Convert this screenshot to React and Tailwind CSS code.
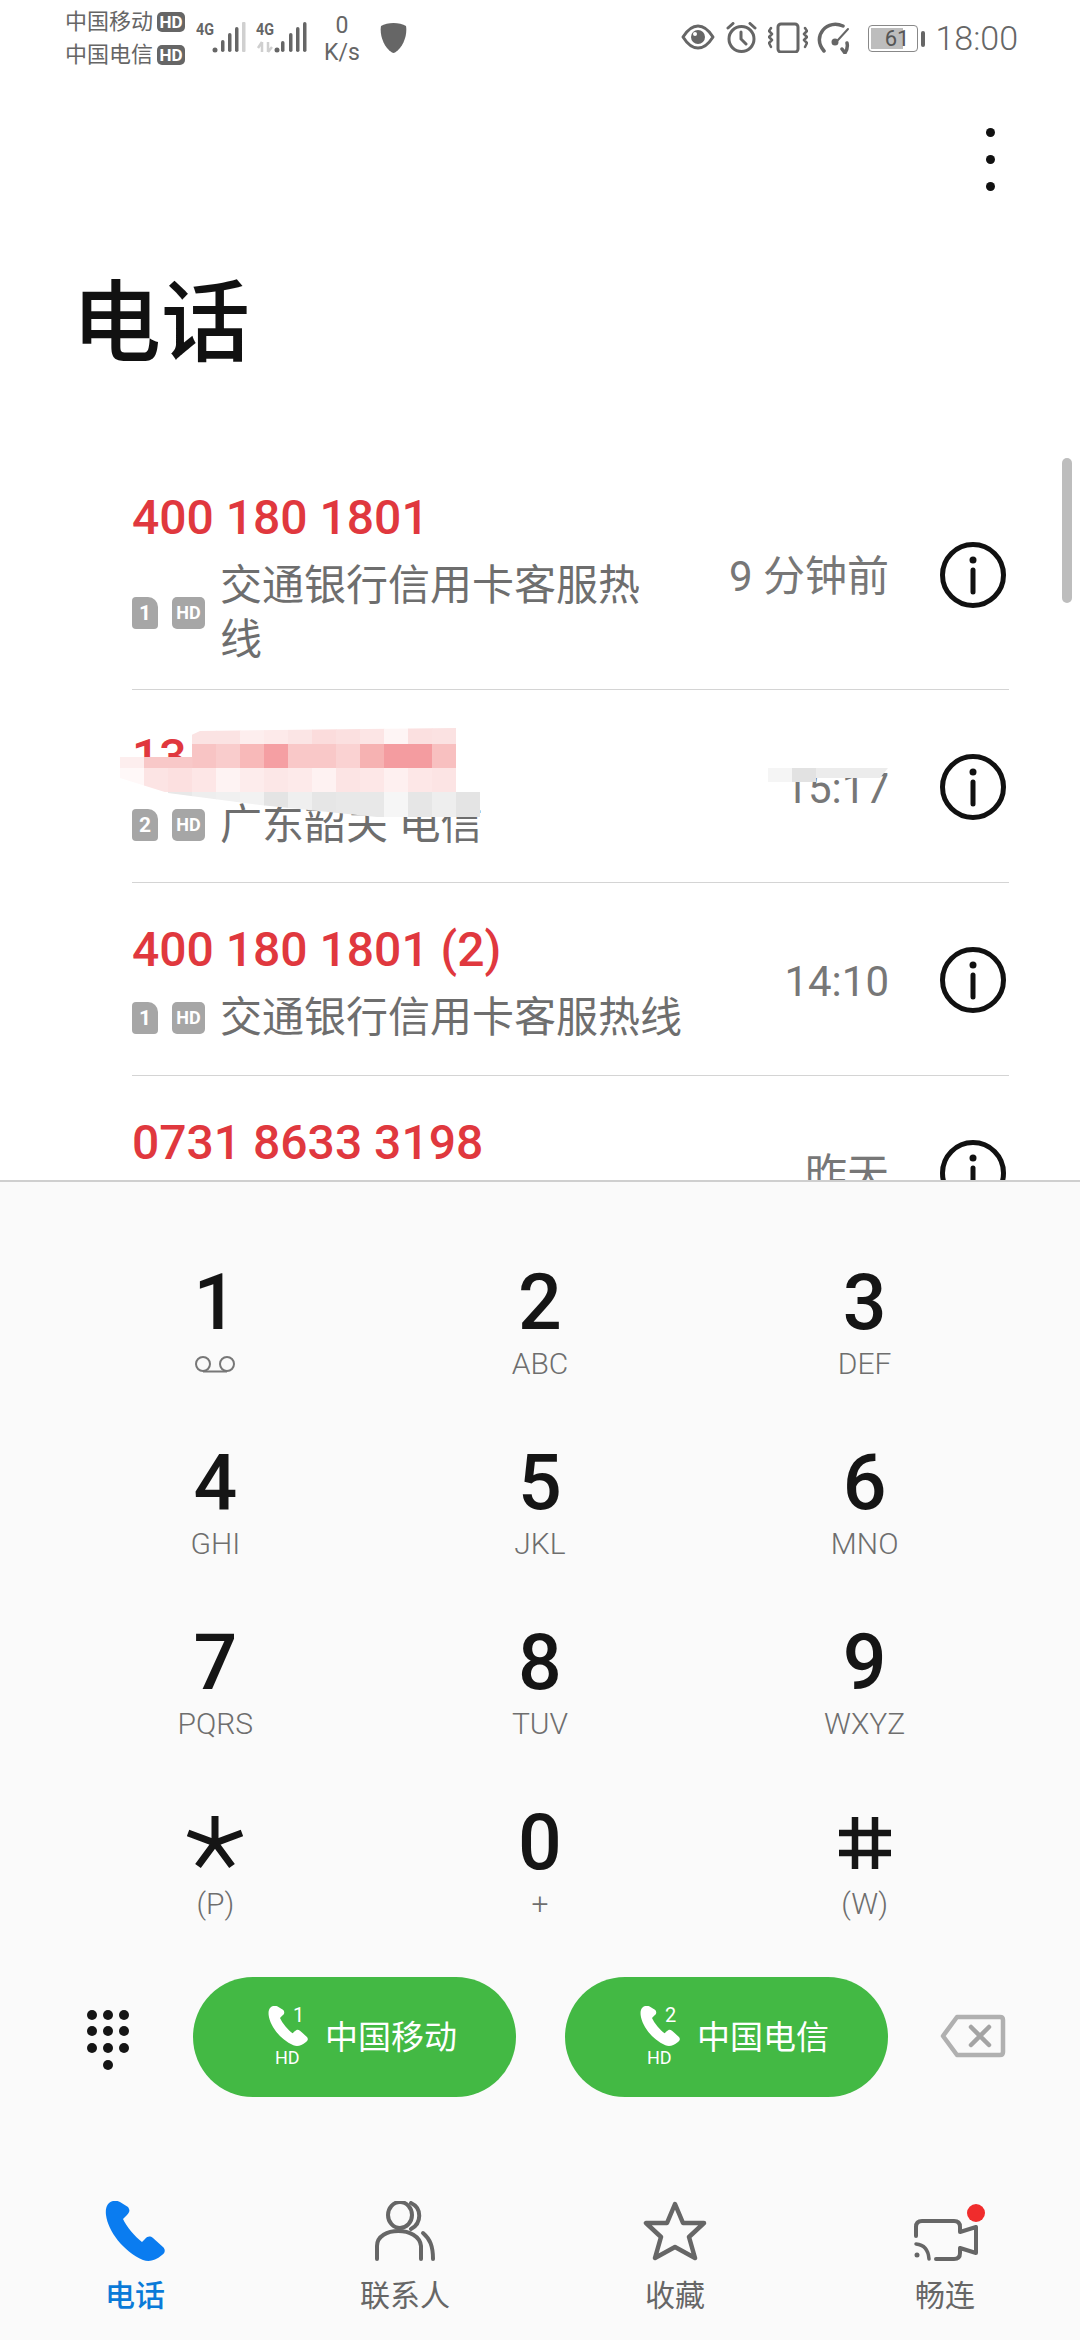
const PHONE = "M8 0C3 1 0 6 1 14C3 30 18 50 38 59C44 61 50 60 57 54C61 51 60 48 58 46L48 37C45 35 43 35 40 38L37 41C30 36 21 25 18 18L22 14C25 11 25 9 23 6L15 1C13 0 10 -1 8 0Z";

const MOSAIC = [
  { y: 728, h: 16, start: 3, colors: ["#fbe3e3","#fbe3e3","#fdeeee","#fdeaea","#fbe5e5","#fbdcdc","#fbe0e0","#fce5e5","#fef5f5","#fbe0e0","#fbe2e2"] },
  { y: 744, h: 24, start: 3, colors: ["#f8c4c4","#f9cccc","#f8b9b9","#f59fa3","#f9c8c8","#f9c8c8","#fad2d2","#f6b2b2","#f49ca0","#f49ca0","#f8c0c0"] },
  { y: 757, h: 11, start: 0, colors: ["#fdeeee","#f8c8c8","#f8c8c8"] },
  { y: 768, h: 24, start: 0, colors: ["#fff8f8","#fce4e4","#fce0e0","#fde6e6","#fef3f3","#fdecec","#fce7e7","#fdeaea","#fef2f2","#fce4e4","#fde7e7","#fef0f0","#fde7e7","#fce4e4"] },
  { y: 792, h: 25, start: 0, colors: ["#ffffff","#ffffff","#e8e8e8","#eeeeee","#f0f0f0","#f2f2f2","#e4e4e4","#efefef","#e6e6e6","#e8e8e8","#e8e8e8","#f6f6f6","#e6e6e6","#eeeeee","#e4e4e4"] },
];

function HdBadge() {
  return <span className="flex h-[20px] w-[28px] items-center justify-center rounded-[5px] bg-[#666666] text-[17px] leading-none font-bold text-white">HD</span>;
}

function StatusBar() {
  return (
    <div className="flex h-[72px] shrink-0 items-start justify-between text-[#666666]">
      <div className="flex items-start">
        <div className="mt-[10px] ml-[65px] flex flex-col gap-[9px] text-[22px] leading-[24px]">
          <div className="flex items-center gap-[4px]"><span>中国移动</span><HdBadge /></div>
          <div className="flex items-center gap-[4px]"><span>中国电信</span><HdBadge /></div>
        </div>
        <svg className="mt-[20px] ml-[11px]" width="112" height="36" viewBox="0 0 112 36" fill="#666666">
          <text x="0" y="15" fontSize="17" fontWeight="700" fontFamily="Roboto" textLength="18" lengthAdjust="spacingAndGlyphs">4G</text>
          <circle cx="19" cy="30" r="2.5" />
          <rect x="25" y="20" width="3.5" height="12" rx="1.750" />
          <rect x="32" y="13" width="3.500" height="19" rx="1.750" />
          <rect x="39" y="7" width="3.500" height="25" rx="1.750" />
          <rect x="46" y="2" width="3.500" height="30" rx="1" fill="#d0d0d0" />
          <text x="60" y="15" fontSize="17" fontWeight="700" fontFamily="Roboto" textLength="18" lengthAdjust="spacingAndGlyphs">4G</text>
          <path d="M66 22v10M62 28l4-6M72 22v10M72 32l4-5" stroke="#cfcfcf" strokeWidth="2.5" fill="none" />
          <circle cx="81" cy="30" r="2.5" />
          <rect x="85" y="21" width="3.500" height="11" rx="1.750" />
          <rect x="93" y="13" width="3.500" height="19" rx="1.750" />
          <rect x="100" y="7" width="3.500" height="25" rx="1.750" />
          <rect x="107" y="2" width="3.500" height="30" rx="1.750" />
        </svg>
        <div className="mt-[12px] ml-[4px] flex w-[60px] flex-col items-center text-[23px] leading-[27px]">
          <span>0</span>
          <span>K/s</span>
        </div>
        <svg className="mt-[23px] ml-[8px]" width="27" height="30" viewBox="0 0 27 30" fill="#666666">
          <path d="M13.5 0C18 0 23 1 26 3C27.500 11 24 24 15 29.500C14 30 13 30 12 29.500C3 24 -0.500 11 1 3C4 1 9 0 13.500 0Z" />
        </svg>
      </div>
      <div className="mt-[22px] mr-[62px] flex items-start">
        <svg className="mt-[2px]" width="34" height="26" viewBox="0 0 34 26" fill="none" stroke="#666666" strokeWidth="3">
          <path d="M2 13C7 5 12 2 17 2C22 2 27 5 32 13C27 21 22 24 17 24C12 24 7 21 2 13Z" strokeLinejoin="round" />
          <circle cx="17" cy="13" r="7" fill="#666666" stroke="none" />
          <circle cx="14" cy="10" r="2" fill="#ffffff" stroke="none" />
        </svg>
        <svg className="ml-[11px]" width="31" height="31" viewBox="0 0 31 31" fill="none" stroke="#666666" strokeWidth="3" strokeLinecap="round">
          <circle cx="15.500" cy="17" r="12.500" />
          <path d="M15 10V17L20 22M2 6L7 1.500M29 6L24 1.500" />
        </svg>
        <svg className="ml-[11px]" width="40" height="31" viewBox="0 0 40 31" fill="none" stroke="#666666" strokeWidth="3" strokeLinecap="round" strokeLinejoin="round">
          <rect x="10" y="2" width="20" height="28" rx="3" />
          <path d="M3 6L1 9L4 12L1 15L4 18L1 21L3 25M37 6L39 9L36 12L39 15L36 18L39 21L37 25" strokeWidth="2.500" />
        </svg>
        <svg className="ml-[9px]" width="38" height="32" viewBox="0 0 38 32" fill="none" stroke="#666666" strokeWidth="3.500" strokeLinecap="round" strokeLinejoin="round">
          <path d="M7 29C1 22 1 14 6 8C11 2 19 1 26 4" />
          <path d="M30 21C31 25 30 28 28 31L25 27" />
          <path d="M31 7L21 18" strokeWidth="2" />
          <circle cx="18" cy="20" r="3.500" fill="#666666" stroke="none" />
        </svg>
        <div className="mt-[3px] ml-[13px] flex items-center">
          <div className="flex h-[27px] w-[50px] items-center rounded-[4px] border border-[#888888] p-[2px]">
            <div className="flex h-full w-[32px] items-center justify-end bg-[#bdbdbd] text-[22px] leading-none text-[#555555]">
              <span className="-mr-[6px]">61</span>
            </div>
          </div>
          <div className="ml-[3px] h-[16px] w-[4px] rounded-[2px] bg-[#666666]" />
        </div>
        <span className="ml-[10px] text-[34px] leading-[32px] font-light">18:00</span>
      </div>
    </div>
  );
}

function InfoIcon() {
  return (
    <svg className="shrink-0" width="66" height="66" viewBox="0 0 66 66" fill="none" stroke="#111111" strokeWidth="5">
      <circle cx="33" cy="33" r="30.500" />
      <circle cx="33" cy="18" r="3.500" fill="#111111" stroke="none" />
      <path d="M33 28V50" strokeLinecap="round" />
    </svg>
  );
}

function SimBadge({ n }) {
  return (
    <span className="flex h-[32px] w-[26px] shrink-0 items-center justify-center rounded-[4px] rounded-tr-[10px] bg-[#a6a6a6] text-[21px] leading-none font-bold text-white">{n}</span>
  );
}

function CallRow({ name, sim, sub, time, tall, last }) {
  return (
    <div className={`flex items-center ${last ? "" : "border-b border-[#d4d4d4]"} ${tall ? "pt-[28px] pb-[22px]" : "pt-[31px] pb-[30px]"}`}>
      <div className="min-w-0 flex-1">
        <div className="h-[72px] text-[48px] leading-[72px] font-medium whitespace-nowrap text-[#e0383e]">{name}</div>
        <div className="mt-[5px] flex items-center">
          <SimBadge n={sim} />
          <span className="ml-[14px] flex h-[32px] w-[33px] shrink-0 items-center justify-center rounded-[5px] bg-[#a6a6a6] text-[18px] leading-none font-bold text-white">HD</span>
          <span className="ml-[15px] text-[42px] leading-[54px] text-[#6e6e6e]">{sub}</span>
        </div>
      </div>
      <span className="mb-[3px] ml-[50px] shrink-0 pt-[8px] text-[42px] leading-[54px] whitespace-nowrap text-[#777777]">{time}</span>
      <span className="mt-[1px] mr-[3px] ml-[51px] flex"><InfoIcon /></span>
    </div>
  );
}

function Mosaic() {
  const clip = [[120,757],[143,757],[184,757],[185,738],[200,731],[456,728],[456,792],[480,792],[480,817],[377,817],[260,805],[168,793],[120,778]]
    .map(([x, y]) => `${x - 110},${y - 720}`).join(" ");
  return (
    <svg className="absolute top-[266px] left-[110px]" width="390" height="110" viewBox="0 0 390 110">
      <defs><clipPath id="mosaic-clip"><polygon points={clip} /></clipPath></defs>
      <g clipPath="url(#mosaic-clip)">
        {MOSAIC.map((row) => row.colors.map((c, i) => (
          <rect key={`${row.y}-${i}`} x={10 + 24 * (row.start + i)} y={row.y - 720} width="24.500" height={row.h} fill={c} />
        )))}
      </g>
    </svg>
  );
}

function CallList() {
  return (
    <div className="relative h-[726px] shrink-0 overflow-hidden">
      <div className="mr-[71px] ml-[132px]">
        <CallRow tall name="400 180 1801" sim="1" sub="交通银行信用卡客服热线" time="9 分钟前" />
        <CallRow name="13" sim="2" sub="广东韶关 电信" time="15:17" />
        <CallRow name="400 180 1801 (2)" sim="1" sub="交通银行信用卡客服热线" time="14:10" />
        <CallRow last name="0731 8633 3198" sim="1" sub={"\u00a0"} time="昨天" />
      </div>
      <Mosaic />
      <svg className="absolute top-[314px] left-[768px]" width="120" height="15" viewBox="0 0 120 15">
        <rect x="0" y="0" width="24" height="14" fill="#f5f5f5" />
        <rect x="24" y="0" width="24" height="14" fill="#e2e2e2" />
        <polygon points="48,0 120,0 112,10 48,10" fill="#ececec" />
      </svg>
      <div className="absolute top-[4px] right-[8px] h-[145px] w-[10px] rounded-full bg-[#bdbdbd]" />
    </div>
  );
}

function Voicemail() {
  return (
    <svg width="42" height="17" viewBox="0 0 42 17" fill="none" stroke="#777777" strokeWidth="2">
      <circle cx="9" cy="8" r="7" />
      <circle cx="33" cy="8" r="7" />
      <path d="M9 15.500H33" />
    </svg>
  );
}

function Key({ digit, label }) {
  return (
    <div className="flex h-[122px] flex-col items-center">
      <div className="flex h-[90px] items-center justify-center text-[77px] leading-[90px] font-medium text-[#151515]">{digit}</div>
      <div className="flex h-[32px] items-center text-[30px] leading-[32px] font-light text-[#6e6e6e]">{label}</div>
    </div>
  );
}

const Star = (
  <svg width="56" height="54" viewBox="0 0 56 54" fill="none" stroke="#151515" strokeWidth="7">
    <path d="M28 0V27M1 17L28 27L55 17M11 50L28 27L45 50" />
  </svg>
);
const Hash = (
  <svg width="52" height="52" viewBox="0 0 52 52" fill="none" stroke="#151515" strokeWidth="6.500">
    <path d="M16 0V52M36 0V52M0 16H52M0 36H52" />
  </svg>
);

function CallButton({ n, name }) {
  return (
    <div className="flex h-[120px] w-[323px] items-center rounded-full bg-[#43b944] pl-[75px] text-white">
      <div className="relative h-[62px] w-[48px]">
        <svg className="absolute top-0 left-0" width="40" height="40" viewBox="0 0 60 60" fill="#ffffff"><path d={PHONE} /></svg>
        <span className="absolute -top-[3px] left-[25px] text-[20px] leading-[24px]">{n}</span>
        <span className="absolute top-[42px] left-[7px] text-[18px] leading-[20px]">HD</span>
      </div>
      <span className="mt-[2px] ml-[9px] text-[33px] leading-[40px]">{name}</span>
    </div>
  );
}

function NavItem({ icon, label, active }) {
  return (
    <div className="flex flex-col items-center">
      <div className="flex h-[60px] items-end justify-center">{icon}</div>
      <div className={`mt-[17px] text-[30px] leading-[36px] ${active ? "font-medium text-[#0a7ad8]" : "text-[#666666]"}`}>{label}</div>
    </div>
  );
}

function DialPad() {
  const dots = [[6,5],[22,5],[38,5],[6,21],[22,21],[38,21],[6,38],[22,38],[38,38],[22,55]];
  return (
    <div className="flex flex-1 flex-col border-t-2 border-[#cfcfcf] bg-[#fafafa] pt-[76px]">
      <div className="grid grid-cols-3 gap-y-[58px] px-[53px]">
        <Key digit="1" label={<Voicemail />} />
        <Key digit="2" label="ABC" />
        <Key digit="3" label="DEF" />
        <Key digit="4" label="GHI" />
        <Key digit="5" label="JKL" />
        <Key digit="6" label="MNO" />
        <Key digit="7" label="PQRS" />
        <Key digit="8" label="TUV" />
        <Key digit="9" label="WXYZ" />
        <Key digit={Star} label="(P)" />
        <Key digit="0" label="+" />
        <Key digit={Hash} label="(W)" />
      </div>
      <div className="mt-[57px] flex h-[120px] items-center pl-[86px]">
        <svg className="mt-[6px]" width="44" height="60" viewBox="0 0 44 60" fill="#151515">
          {dots.map(([x, y]) => <circle key={`${x}-${y}`} cx={x} cy={y} r="5" />)}
        </svg>
        <div className="ml-[63px]"><CallButton n="1" name="中国移动" /></div>
        <div className="ml-[49px]"><CallButton n="2" name="中国电信" /></div>
        <svg className="mt-[-2px] ml-[52px]" width="66" height="44" viewBox="0 0 66 44" fill="none" stroke="#b0b0b0" strokeWidth="4.500" strokeLinejoin="round">
          <path d="M17 3H60Q63 3 63 6V38Q63 41 60 41H17L3 22Z" />
          <path d="M31 13L49 31M49 13L31 31" stroke="#a4a4a4" strokeLinecap="round" />
        </svg>
      </div>
      <div className="mt-[104px] grid grid-cols-4">
        <NavItem active label="电话" icon={<svg width="60" height="60" viewBox="0 0 60 60" fill="#0a7cf0"><path d={PHONE} /></svg>} />
        <NavItem label="联系人" icon={
          <svg width="60" height="60" viewBox="0 0 60 60" fill="none" stroke="#666666" strokeWidth="4" strokeLinecap="round">
            <ellipse cx="25" cy="14" rx="12" ry="13" />
            <path d="M36 2C47 7 47 22 36 28" />
            <path d="M2 58V45C2 25 44 25 46 45V58" />
            <path d="M48 32C55 38 58 45 58 58" />
          </svg>} />
        <NavItem label="收藏" icon={
          <svg width="64" height="60" viewBox="0 0 64 60" fill="none" stroke="#666666" strokeWidth="4.500" strokeLinejoin="round">
            <path d="M32 3L40 22H61L46 36L52 57L32 46L12 57L18 36L3 22H24Z" />
          </svg>} />
        <NavItem label="畅连" icon={
          <div className="relative h-[51px] w-[65px]">
            <svg className="absolute bottom-0 left-0" width="66" height="42" viewBox="0 0 66 42" fill="none" stroke="#666666" strokeWidth="4" strokeLinecap="round" strokeLinejoin="round">
              <path d="M3 17V8Q3 2 9 2H41Q47 2 47 8V13L63 8V34L47 29V34Q47 40 41 40H23" />
              <path d="M3 25Q15 26 16 40" strokeWidth="3.500" />
              <circle cx="4" cy="36" r="2.500" fill="#666666" stroke="none" />
            </svg>
            <div className="absolute top-[-6px] right-[-7px] h-[18px] w-[18px] rounded-full bg-[#f02c2c]" />
          </div>} />
      </div>
    </div>
  );
}

export default function App() {
  return (
    <div className="flex h-[2340px] w-[1080px] flex-col overflow-hidden bg-white font-[Roboto,'Noto_Sans_CJK_SC',sans-serif]">
      <StatusBar />
      <div className="flex h-[174px] shrink-0 flex-col items-end justify-center gap-[18px] pr-[85px]">
        <div className="h-[9px] w-[9px] rounded-full bg-[#111111]" />
        <div className="h-[9px] w-[9px] rounded-full bg-[#111111]" />
        <div className="h-[9px] w-[9px] rounded-full bg-[#111111]" />
      </div>
      <div className="mt-[28px] mb-[80px] ml-[72px] h-[100px] text-[89px] leading-[100px] font-medium text-[#111111]">电话</div>
      <CallList />
      <DialPad />
    </div>
  );
}
